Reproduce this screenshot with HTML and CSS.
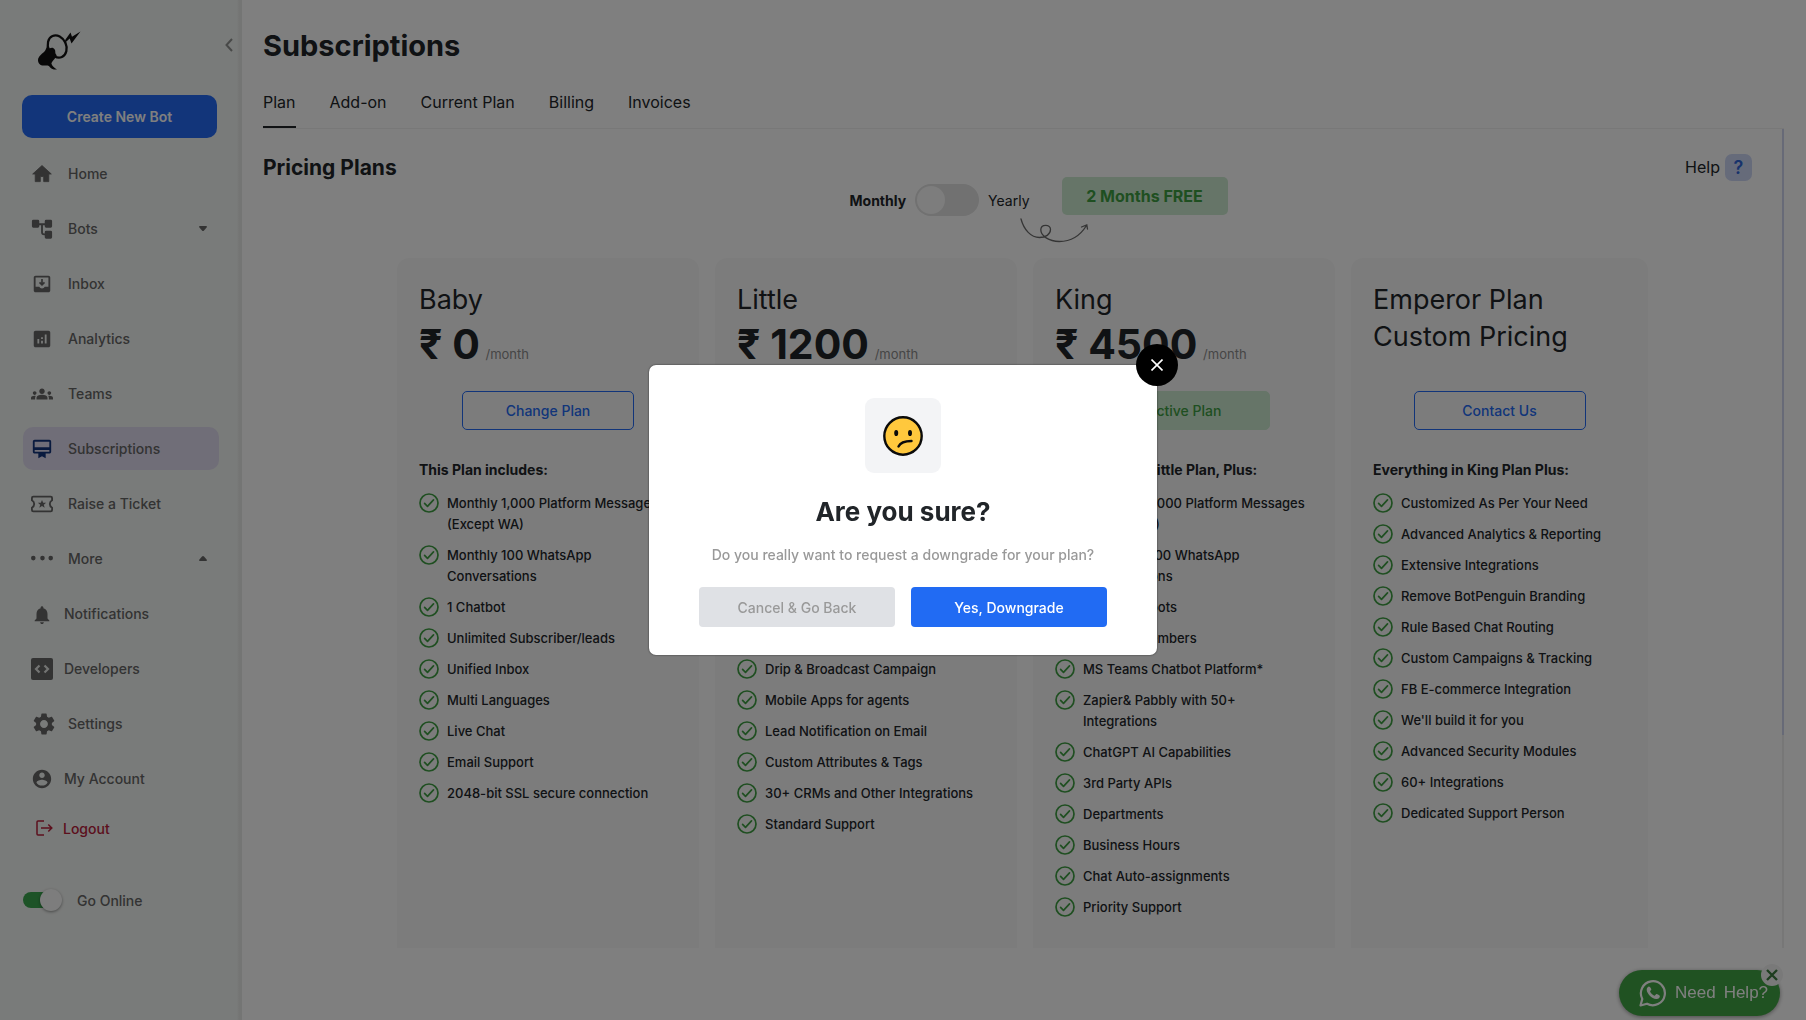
FILE: index.html
```html
<!DOCTYPE html>
<html lang="en">
<head>
<meta charset="utf-8">
<title>Subscriptions</title>
<meta name="viewport" content="width=device-width, initial-scale=1">
<link rel="stylesheet" href="styles.css">
</head>
<body>
<svg class="sprite" aria-hidden="true">
  <symbol id="check" viewBox="0 0 20 20">
    <circle cx="10" cy="10" r="9" fill="none" stroke="currentColor" stroke-width="1.7"/>
    <path d="M5.6 10.4l2.9 2.9 6-6.4" fill="none" stroke="currentColor" stroke-width="1.7" stroke-linecap="round" stroke-linejoin="round"/>
  </symbol>
</svg>

<div class="app">
  <aside class="sidebar">
    <div class="sidebar-top">
      <a href="#" class="logo" aria-label="Dashboard">
        <svg width="44" height="40" viewBox="0 0 44 40">
          <ellipse cx="20.200" cy="15.500" rx="9" ry="11.500" transform="rotate(-24 20.200 15.500)" fill="none" stroke="#111" stroke-width="2.300"/>
          <path d="M10 15c-.8 2.500-1.300 4.200-3 6C4.800 23 1 25.500 1 29.200c0 3 2.200 5.300 5.600 5.300 2.200 0 3.800-.3 5.300.4 1.600 2.200 4 3.900 8.100 3.700-2.600-1.500-5.100-3.600-5.600-6 .4-2.400 4.300-5.100 5.300-8.300-.9-1.100-1.500-2-1.400-3.300.2-1.700-.8-3.800-2.700-4.300-1.200-.2-2.300.3-3.100.9z" fill="#111"/>
          <path d="M28.500 8.500l5-7 1.500 4.200 8.500-5.200-9 12-1.800-5-5.700 5.200z" fill="#111"/>
        </svg>
      </a>
      <button class="collapse" type="button" aria-label="Collapse menu">
        <svg width="8" height="14" viewBox="0 0 8 14"><path d="M7 1L1.500 7 7 13" fill="none" stroke="#909291" stroke-width="2"/></svg>
      </button>
    </div>
    <button class="create" type="button">Create New Bot</button>

    <nav class="menu">
      <a href="#" class="item"><svg class="ico" viewBox="-1 -1 26 26"><path d="M10 21v-6h4v6h6v-9h3L12 2 1 12h3v9z" stroke="currentColor" stroke-linejoin="round"/></svg>Home</a>
      <a href="#" class="item"><svg class="ico" viewBox="0 0 24 24"><path d="M2.500 3.500h5V9h-5zM16.500 3.500h5V9h-5zM16.500 15.500h5V21h-5z" stroke="currentColor" stroke-width="3" stroke-linejoin="round"/><path d="M7 6.800h9M12 7v8.500q0 2.300 2.300 2.300H16" fill="none" stroke="currentColor" stroke-width="2"/></svg>Bots
        <svg class="caret" viewBox="0 0 8 5"><path d="M1 0h6q1 0 1 1L5 4.500q-1 1-2 0L0 1q0-1 1-1z"/></svg></a>
      <a href="#" class="item"><svg class="ico" viewBox="0 0 24 24"><path fill-rule="evenodd" d="M5 3h14c1.100 0 2 .9 2 2v14c0 1.100-.9 2-2 2H5c-1.100 0-2-.9-2-2V5c0-1.100.9-2 2-2zm0 2v10h4q.8 2 3 2t3-2h4V5z"/><path d="M12 6.500v6M9.300 10.200L12 13l2.700-2.800" fill="none" stroke="currentColor" stroke-width="1.800"/></svg>Inbox</a>
      <a href="#" class="item"><svg class="ico" viewBox="0 0 24 24"><path d="M19 3H5c-1.100 0-2 .9-2 2v14c0 1.100.9 2 2 2h14c1.100 0 2-.9 2-2V5c0-1.100-.9-2-2-2zM9 17H7v-5h2v5zm4 0h-2v-3h2v3zm0-5h-2v-2h2v2zm4 5h-2V7h2v10z"/></svg>Analytics</a>
      <a href="#" class="item"><svg class="ico" viewBox="0 0 24 24"><path d="M12 12.750c1.630 0 3.070.39 4.240.9 1.080.48 1.760 1.560 1.760 2.730V18H6v-1.610c0-1.180.68-2.260 1.760-2.730 1.170-.52 2.610-.91 4.240-.91zM4 13c1.100 0 2-.9 2-2s-.9-2-2-2-2 .9-2 2 .9 2 2 2zm1.130 1.100c-.37-.06-.74-.1-1.130-.1-.99 0-1.930.21-2.780.58C.48 14.900 0 15.620 0 16.430V18h4.500v-1.610c0-.83.23-1.610.63-2.290zM20 13c1.100 0 2-.9 2-2s-.9-2-2-2-2 .9-2 2 .9 2 2 2zm4 3.430c0-.81-.48-1.530-1.220-1.850-.85-.37-1.790-.58-2.780-.58-.39 0-.76.04-1.130.1.4.68.63 1.460.63 2.290V18H24v-1.570zM12 6c1.660 0 3 1.340 3 3s-1.340 3-3 3-3-1.340-3-3 1.340-3 3-3z"/></svg>Teams</a>
      <a href="#" class="item active" aria-current="page"><svg class="ico" viewBox="0 0 24 24"><path d="M20 2H4c-1.110 0-2 .89-2 2v11c0 1.110.89 2 2 2h4v5l4-2 4 2v-5h4c1.110 0 2-.89 2-2V4c0-1.110-.89-2-2-2zm0 13H4v-2h16v2zm0-5H4V4h16v6z"/></svg>Subscriptions</a>
      <a href="#" class="item"><svg class="ico" viewBox="0 0 24 24"><path d="M2.500 4h19q1.500 0 1.500 1.500V8q-2.500 1.500-2.500 4t2.500 4v2.500q0 1.500-1.500 1.500h-19Q1 20 1 18.500V16q2.500-1.500 2.500-4T1 8V5.500Q1 4 2.500 4z" fill="none" stroke="currentColor" stroke-width="2"/><path d="M12 7.500l1.300 3 3.200.2-2.500 2.100.9 3.200-2.900-1.800L9.100 16l.9-3.200-2.500-2.100 3.200-.2z"/></svg>Raise a Ticket</a>
      <a href="#" class="item"><svg class="ico" viewBox="0 0 24 24"><circle cx="2.500" cy="11" r="2.500"/><circle cx="12.500" cy="11" r="2.500"/><circle cx="21.500" cy="11" r="2.500"/></svg>More
        <svg class="caret" viewBox="0 0 8 5"><path d="M1 5h6q1 0 1-1L5 .5q-1-1-2 0L0 4q0 1 1 1z"/></svg></a>
      <a href="#" class="item sub"><svg class="ico" viewBox="0 0 24 22"><path d="M12 22c1.100 0 2-.9 2-2h-4c0 1.100.89 2 2 2zm6-6v-5c0-3.070-1.640-5.640-4.500-6.320V4c0-.83-.67-1.500-1.500-1.500s-1.500.67-1.500 1.500v.68C7.630 5.360 6 7.920 6 11v5l-2 2v1h16v-1l-2-2z"/></svg>Notifications</a>
      <a href="#" class="item sub"><svg class="ico" viewBox="0 0 22 22"><path d="M2 0h18q2 0 2 2v18q0 2-2 2H2q-2 0-2-2V2q0-2 2-2z"/><path d="M8.500 7.500L5 11l3.500 3.500M13.500 7.500L17 11l-3.500 3.500" fill="none" stroke="#e6e8e6" stroke-width="2.200"/></svg>Developers</a>
      <a href="#" class="item settings"><svg class="ico" viewBox="2 2 20 20"><path d="M19.140 12.940c.04-.3.06-.61.06-.94 0-.32-.02-.64-.07-.94l2.030-1.580c.18-.14.23-.41.12-.61l-1.920-3.320c-.12-.22-.37-.29-.59-.22l-2.390.96c-.5-.38-1.030-.7-1.620-.94l-.36-2.540c-.04-.24-.24-.41-.48-.41h-3.840c-.24 0-.43.17-.47.41l-.36 2.540c-.59.24-1.130.57-1.620.94l-2.390-.96c-.22-.08-.47 0-.59.22L2.740 8.870c-.12.21-.08.47.12.61l2.030 1.580c-.05.3-.09.63-.09.94s.02.64.07.94l-2.030 1.580c-.18.14-.23.41-.12.61l1.920 3.320c.12.22.37.29.59.22l2.390-.96c.5.38 1.030.7 1.620.94l.36 2.540c.05.24.24.41.48.41h3.840c.24 0 .44-.17.47-.41l.36-2.540c.59-.24 1.130-.56 1.620-.94l2.390.96c.22.08.47 0 .59-.22l1.920-3.320c.12-.22.07-.47-.12-.61l-2.010-1.580zM12 15.600c-1.980 0-3.600-1.620-3.600-3.600s1.620-3.600 3.600-3.600 3.600 1.620 3.600 3.600-1.620 3.600-3.600 3.600z"/></svg>Settings</a>
      <a href="#" class="item sub"><svg class="ico" viewBox="0 0 24 24"><path d="M12 2C6.480 2 2 6.480 2 12s4.480 10 10 10 10-4.480 10-10S17.520 2 12 2zm0 3c1.660 0 3 1.340 3 3s-1.340 3-3 3-3-1.340-3-3 1.340-3 3-3zm0 14.200c-2.500 0-4.710-1.280-6-3.220.03-1.990 4-3.080 6-3.080 1.990 0 5.970 1.090 6 3.080-1.290 1.940-3.500 3.220-6 3.220z"/></svg>My Account</a>
    </nav>
    <a href="#" class="logout"><svg width="17" height="16" viewBox="0 0 17 16"><path d="M8 1H2Q1 1 1 2v12q0 1 1 1h6M5 8h10.500M12.300 4.500L15.800 8l-3.500 3.500" fill="none" stroke="currentColor" stroke-width="1.500"/></svg>Logout</a>
    <label class="online"><input type="checkbox" role="switch" class="online-switch" checked>Go Online</label>
  </aside>

  <main class="main">
    <h1>Subscriptions</h1>
    <nav class="tabs">
      <a href="#" class="tab current" aria-current="page">Plan</a>
      <a href="#" class="tab">Add-on</a>
      <a href="#" class="tab">Current Plan</a>
      <a href="#" class="tab">Billing</a>
      <a href="#" class="tab">Invoices</a>
    </nav>
    <div class="scroller">
      <div class="content">
        <div class="plan-head">
          <h2>Pricing Plans</h2>
          <div class="period">
            <label class="period-toggle"><b>Monthly</b><input type="checkbox" role="switch" class="period-switch"><span>Yearly</span></label>
            <div class="free">2 Months FREE
              <svg class="swirl" width="70" height="26" viewBox="0 0 70 26"><path d="M1 1c3 11 10 18.500 18.500 18.500 6 0 11-3 11-8 0-2.500-2-4.200-4.800-4.200s-4.900 1.800-4.900 4.500c0 6 8 11.700 18.500 11.700C51 23.500 60 18 66.500 7.500M61.500 9l5.300-2.200L67.500 11" fill="none" stroke="#6b6b6b" stroke-width="1.300" stroke-linecap="round"/></svg>
            </div>
          </div>
          <a href="#" class="help">Help <span class="help-mark">?</span></a>
        </div>

        <div class="plans">
          <section class="plan">
            <header><h3>Baby</h3><p class="price">₹ 0 <small>/month</small></p></header>
            <button type="button" class="plan-btn">Change Plan</button>
            <h4>This Plan includes:</h4>
            <ul>
              <li><svg><use href="#check"/></svg><span>Monthly 1,000 Platform Messages<br>(Except WA)</span></li>
              <li><svg><use href="#check"/></svg><span>Monthly 100 WhatsApp<br>Conversations</span></li>
              <li><svg><use href="#check"/></svg>1 Chatbot</li>
              <li><svg><use href="#check"/></svg>Unlimited Subscriber/leads</li>
              <li><svg><use href="#check"/></svg>Unified Inbox</li>
              <li><svg><use href="#check"/></svg>Multi Languages</li>
              <li><svg><use href="#check"/></svg>Live Chat</li>
              <li><svg><use href="#check"/></svg>Email Support</li>
              <li><svg><use href="#check"/></svg>2048-bit SSL secure connection</li>
            </ul>
          </section>
          <section class="plan">
            <header><h3>Little</h3><p class="price">₹ 1200 <small>/month</small></p></header>
            <button type="button" class="plan-btn">Change Plan</button>
            <h4>Everything in Baby Plan, Plus:</h4>
            <ul>
              <li><svg><use href="#check"/></svg><span>Monthly 10,000 Platform Messages<br>(Except WA)</span></li>
              <li><svg><use href="#check"/></svg><span>Monthly 500 WhatsApp<br>Conversations</span></li>
              <li><svg><use href="#check"/></svg>5 Chatbots</li>
              <li><svg><use href="#check"/></svg>5 Team Members</li>
              <li><svg><use href="#check"/></svg>Drip &amp; Broadcast Campaign</li>
              <li><svg><use href="#check"/></svg>Mobile Apps for agents</li>
              <li><svg><use href="#check"/></svg>Lead Notification on Email</li>
              <li><svg><use href="#check"/></svg>Custom Attributes &amp; Tags</li>
              <li><svg><use href="#check"/></svg>30+ CRMs and Other Integrations</li>
              <li><svg><use href="#check"/></svg>Standard Support</li>
            </ul>
          </section>
          <section class="plan">
            <header><h3>King</h3><p class="price">₹ 4500 <small>/month</small></p></header>
            <button type="button" class="plan-btn on">Active Plan</button>
            <h4>Everything in Little Plan, Plus:</h4>
            <ul>
              <li><svg><use href="#check"/></svg><span>Monthly 50,000 Platform Messages<br>(Except WA)</span></li>
              <li><svg><use href="#check"/></svg><span>Monthly 1,000 WhatsApp<br>Conversations</span></li>
              <li><svg><use href="#check"/></svg>1,000 Chatbots</li>
              <li><svg><use href="#check"/></svg>10 Team Members</li>
              <li><svg><use href="#check"/></svg>MS Teams Chatbot Platform*</li>
              <li><svg><use href="#check"/></svg><span>Zapier&amp; Pabbly with 50+<br>Integrations</span></li>
              <li><svg><use href="#check"/></svg>ChatGPT AI Capabilities</li>
              <li><svg><use href="#check"/></svg>3rd Party APIs</li>
              <li><svg><use href="#check"/></svg>Departments</li>
              <li><svg><use href="#check"/></svg>Business Hours</li>
              <li><svg><use href="#check"/></svg>Chat Auto-assignments</li>
              <li><svg><use href="#check"/></svg>Priority Support</li>
            </ul>
          </section>
          <section class="plan">
            <header><h3>Emperor Plan<br>Custom Pricing</h3></header>
            <button type="button" class="plan-btn">Contact Us</button>
            <h4>Everything in King Plan Plus:</h4>
            <ul>
              <li><svg><use href="#check"/></svg>Customized As Per Your Need</li>
              <li><svg><use href="#check"/></svg>Advanced Analytics &amp; Reporting</li>
              <li><svg><use href="#check"/></svg>Extensive Integrations</li>
              <li><svg><use href="#check"/></svg>Remove BotPenguin Branding</li>
              <li><svg><use href="#check"/></svg>Rule Based Chat Routing</li>
              <li><svg><use href="#check"/></svg>Custom Campaigns &amp; Tracking</li>
              <li><svg><use href="#check"/></svg>FB E-commerce Integration</li>
              <li><svg><use href="#check"/></svg>We'll build it for you</li>
              <li><svg><use href="#check"/></svg>Advanced Security Modules</li>
              <li><svg><use href="#check"/></svg>60+ Integrations</li>
              <li><svg><use href="#check"/></svg>Dedicated Support Person</li>
            </ul>
          </section>
        </div>
      </div>
      <div class="track"><div class="thumb"></div></div>
    </div>
  </main>
</div>

<div class="chat">
  <a href="#" class="chat-link">
    <svg width="28" height="28" viewBox="0 0 28 28"><path d="M1.500 26.500l1.800-6.600A12 12 0 1 1 8 24.700z" fill="none" stroke="#fff" stroke-width="2.200" stroke-linejoin="round"/><path d="M10 7.600c-.8 0-2.500 1.200-2.300 3.400.3 3.600 4.800 8.600 9.600 9.100 2 .2 3.500-1.300 3.600-3.100 0-.5-2.900-2-3.400-1.900-.6.100-1.200 1.600-1.700 1.600-1.500-.3-4.300-2.900-4.700-4.300 0-.6 1.200-1.200 1.200-1.800 0-.5-1.200-3-2.300-3z" fill="#fff"/></svg>
    <span>Need</span><span>Help?</span>
  </a>
  <button type="button" class="chat-close" aria-label="Hide chat"><svg width="12" height="12" viewBox="0 0 12 12"><path d="M1 1l10 10M11 1L1 11" stroke="#3d7b3f" stroke-width="2.400"/></svg></button>
</div>

<div class="overlay">
  <div class="modal" role="dialog" aria-modal="true" aria-labelledby="modal-title">
    <button type="button" class="close" aria-label="Close"><svg width="12" height="12" viewBox="0 0 12 12"><path d="M.5.500l11 11M11.500.500l-11 11" stroke="#fff" stroke-width="1.600"/></svg></button>
    <div class="face">
      <svg width="40" height="40" viewBox="0 0 40 40"><circle cx="20" cy="20" r="18.700" fill="#ffc83d" stroke="#0b0b0b" stroke-width="2.400"/><ellipse cx="13.200" cy="17" rx="2" ry="3.100" fill="#0b0b0b"/><ellipse cx="27" cy="17" rx="2" ry="3.100" fill="#0b0b0b"/><path d="M15.500 30.500q2.500-5.500 13-5.500" fill="none" stroke="#0b0b0b" stroke-width="2.400" stroke-linecap="round"/></svg>
    </div>
    <h2 id="modal-title">Are you sure?</h2>
    <p>Do you really want to request a downgrade for your plan?</p>
    <div class="actions">
      <button type="button" class="btn-cancel">Cancel &amp; Go Back</button>
      <button type="button" class="btn-go">Yes, Downgrade</button>
    </div>
  </div>
</div>
</body>
</html>
```

FILE: styles.css
```css
* { box-sizing: border-box; }

body {
  margin: 0;
  background: #fff;
  color: #212529;
  font-family: Inter, "Liberation Sans", sans-serif;
  font-size: 14px;
}

h1, h2, h3, h4, p, ul { margin: 0; padding: 0; }
a { color: inherit; text-decoration: none; }
button { font: inherit; padding: 0; border: 0; cursor: pointer; }
.sprite { display: none; }

.app { display: flex; height: 100vh; overflow: hidden; }

/* Sidebar */
.sidebar {
  flex: none;
  width: 242px;
  padding: 0 23px 0 22px;
  background: linear-gradient(to right, #f3f6f4 237px, #e9ebe9 239px);
  color: #666;
  font-weight: 500;
}

.sidebar-top {
  display: flex;
  justify-content: space-between;
  align-items: flex-start;
  height: 95px;
  margin-right: -14px;
  padding: 31px 0 0 15px;
}

.collapse { display: flex; margin-top: 7px; background: none; }

.create {
  display: block;
  width: 195px;
  height: 43px;
  border-radius: 10px;
  background: #246bf4;
  color: #fff;
  font-weight: 600;
}

.menu { display: flex; flex-direction: column; gap: 12px; margin-top: 14px; }

.item {
  display: flex;
  align-items: center;
  gap: 15px;
  height: 43px;
  margin-left: 1px;
  padding: 0 12px 0 8px;
  border-radius: 10px;
}
.item.active { background: #e0dcf0; }
.item.active .ico { color: #13357d; }
.item.sub { gap: 11px; }
.item.settings { gap: 13px; padding-left: 10px; }

.ico { flex: none; width: 22px; height: 22px; fill: currentColor; }
.caret { width: 8px; height: 5px; margin-left: auto; fill: currentColor; }

.logout {
  display: flex;
  align-items: center;
  gap: 10px;
  margin-top: 16px;
  padding-left: 14px;
  height: 24px;
  color: #b8203a;
}

.online { display: flex; align-items: center; gap: 14px; margin-top: 48px; padding-left: 1px; height: 24px; }

.online-switch {
  appearance: none;
  position: relative;
  width: 40px;
  height: 16px;
  margin: 0;
}
.online-switch::before {
  content: "";
  display: block;
  width: 34px;
  height: 16px;
  border-radius: 8px;
  background: #3aa64e;
}
.online-switch::after {
  content: "";
  position: absolute;
  top: -3px;
  right: 1px;
  width: 22px;
  height: 22px;
  border-radius: 50%;
  background: #fafafa;
  box-shadow: 0 1px 3px rgba(0, 0, 0, .4);
}

/* Main column */
.main {
  flex: 1;
  min-width: 0;
  display: flex;
  flex-direction: column;
  padding: 24px 22px 72px 21px;
}

h1 { font-size: 29px; line-height: 44px; font-weight: 700; }

.tabs {
  display: flex;
  gap: 34px;
  margin-top: 14px;
  border-bottom: 1px solid #f0f0f0;
  font-size: 16px;
}
.tab { height: 46px; line-height: 40px; }
.tab.current { border-bottom: 2px solid #212529; }

.scroller { flex: 1; min-height: 0; display: flex; }
.content { flex: 1; min-width: 0; overflow: hidden; }
.track { flex: none; width: 2px; background: #eee; }
.thumb { height: 74%; background: #cfd4ee; }

.plan-head {
  display: grid;
  grid-template-columns: 1fr auto 1fr;
  align-items: start;
  min-height: 129px;
  padding: 25px 30px 0 0;
}
.plan-head h2 { font-size: 21px; line-height: 27px; font-weight: 700; }

.period { display: flex; align-items: flex-start; gap: 32px; padding: 23px 0 0 62px; }
.period-toggle { display: flex; align-items: center; gap: 9px; margin-top: 7px; }

.period-switch {
  appearance: none;
  width: 64px;
  height: 32px;
  margin: 0;
  padding: 2px;
  border-radius: 16px;
  background: #e2e2e2;
}
.period-switch::before {
  content: "";
  display: block;
  width: 28px;
  height: 28px;
  border-radius: 50%;
  background: #fafafa;
}

.free {
  position: relative;
  width: 166px;
  border-radius: 5px;
  background: #ccebd0;
  color: #3f9e43;
  font-size: 16px;
  line-height: 38px;
  font-weight: 700;
  text-align: center;
}
.swirl { position: absolute; left: -42px; top: 41px; }

.help { display: flex; align-items: center; justify-content: flex-end; gap: 5px; font-size: 16px; line-height: 27px; }
.help-mark {
  width: 27px;
  height: 27px;
  border-radius: 7px;
  background: #ccd6f5;
  color: #2f65d8;
  font-size: 18px;
  font-weight: 600;
  text-align: center;
}

.plans {
  display: grid;
  grid-template-columns: 302fr 302fr 302fr 297fr;
  gap: 16px;
  max-width: 1251px;
  min-height: 760px;
  margin: 0 auto;
}

.plan { padding: 23px 22px 30px; border-radius: 12px; background: #f9f9f9; }
.plan header { min-height: 90px; }
.plan h3 { font-size: 27px; line-height: 37px; font-weight: 400; }
.price { height: 53px; font-size: 41px; line-height: 53px; font-weight: 700; white-space: nowrap; }
.price small { margin-left: -4px; font-size: 13px; line-height: 13px; font-weight: 400; color: #8c8c8c; }

.plan-btn {
  display: block;
  width: 172px;
  height: 39px;
  margin: 20px auto 29px;
  border: 1px solid #246bf4;
  border-radius: 5px;
  background: none;
  color: #246bf4;
  font-weight: 500;
}
.plan-btn.on { border-color: #ccebd0; background: #ccebd0; color: #3f9e43; }

.plan h4 { font-size: 14px; line-height: 21px; font-weight: 700; }
.plan ul { display: flex; flex-direction: column; gap: 10px; margin-top: 13px; list-style: none; }
.plan li { display: flex; gap: 8px; font-size: 13px; line-height: 21px; font-weight: 500; white-space: nowrap; }
.plan li svg { flex: none; width: 20px; height: 20px; color: #3f9e43; }

/* Chat launcher */
.chat { position: fixed; right: 26px; bottom: 4px; }
.chat-link {
  display: flex;
  align-items: center;
  gap: 8px;
  width: 161px;
  height: 46px;
  padding-left: 20px;
  border-radius: 23px;
  background: #41a544;
  box-shadow: 0 1px 4px rgba(0, 0, 0, .4);
  color: #fff;
  font: 17px "Liberation Sans", Arial, sans-serif;
}
.chat-close {
  position: absolute;
  top: -6px;
  right: -3px;
  display: flex;
  align-items: center;
  justify-content: center;
  width: 22px;
  height: 22px;
  border-radius: 50%;
  background: #f3f3f3;
}

/* Confirmation dialog */
.overlay {
  position: fixed;
  inset: 0;
  display: flex;
  align-items: center;
  justify-content: center;
  background: rgba(0, 0, 0, .5);
}

.modal {
  position: relative;
  width: 508px;
  padding: 33px 50px 28px;
  border-radius: 7px;
  background: #fff;
  box-shadow: 0 0 2px rgba(0, 0, 0, .7);
  text-align: center;
}
.close {
  position: absolute;
  top: -21px;
  right: -21px;
  display: flex;
  align-items: center;
  justify-content: center;
  width: 42px;
  height: 42px;
  border-radius: 50%;
  background: #000;
}
.face {
  display: flex;
  align-items: center;
  justify-content: center;
  width: 76px;
  height: 75px;
  margin: 0 auto;
  border-radius: 9px;
  background: #f3f4f6;
}
.modal h2 { margin-top: 19px; font-size: 26px; line-height: 40px; font-weight: 700; }
.modal p { margin-top: 12px; font-size: 14px; line-height: 22px; font-weight: 500; color: #999; }
.actions { display: flex; gap: 16px; margin-top: 21px; }
.actions button { flex: 1; height: 40px; border-radius: 4px; font-weight: 500; }
.btn-cancel { background: #dfe1e5; color: #999; }
.btn-go { background: #216bf3; color: #fff; }
```
